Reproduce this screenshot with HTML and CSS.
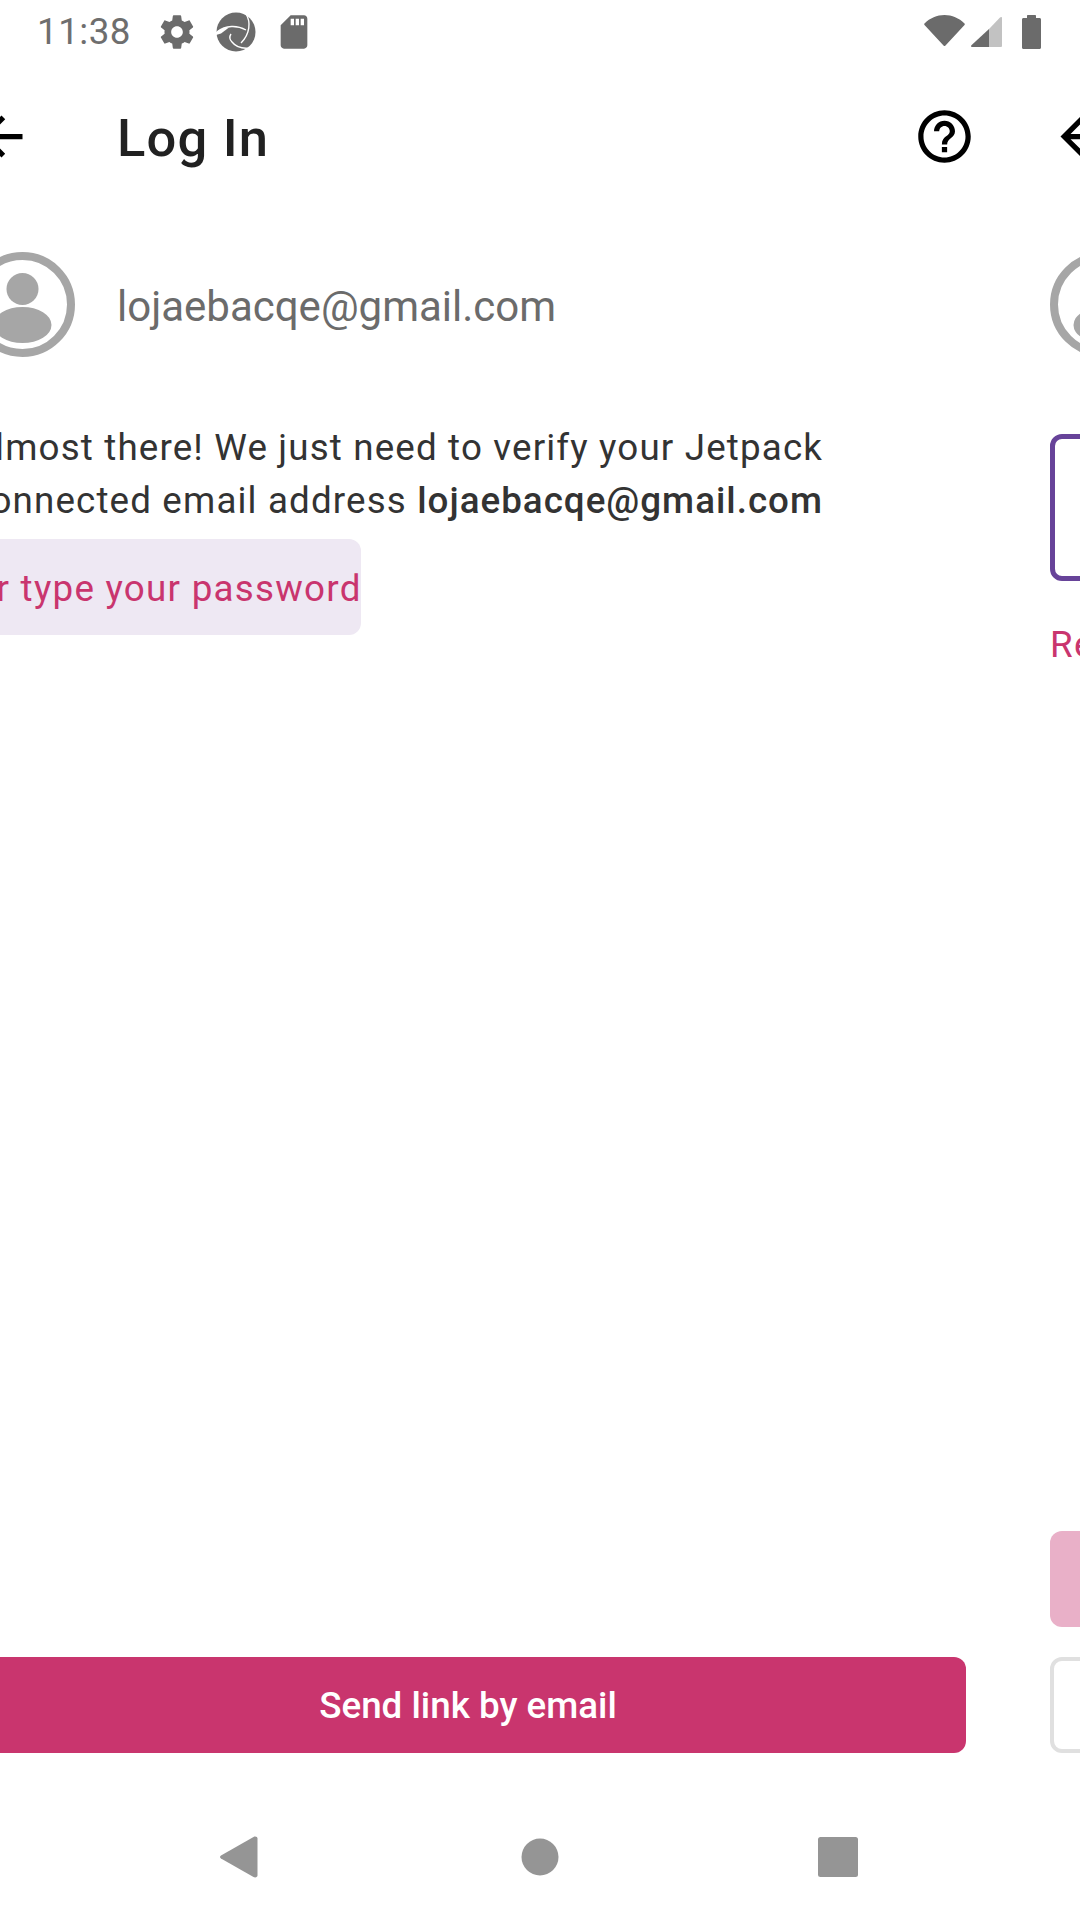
FILE: index.html
```html
<!DOCTYPE html>
<html lang="en-US">

<head>
    <meta charset="UTF-8">
    <title>Log In</title>
    <link rel="stylesheet" href="styles.css">
</head>

<body>
    <div class="screen">
        <div class="statusBar">
            <span class="clock">11:38</span>
            <svg class="gear" viewBox="0 0 24 24"><path d="M19.43 12.98c.04-.32.07-.64.07-.98s-.03-.66-.07-.98l2.11-1.65c.19-.15.24-.42.12-.64l-2-3.46c-.12-.22-.39-.3-.61-.22l-2.49 1c-.52-.4-1.08-.73-1.69-.98l-.38-2.65C14.46 2.18 14.25 2 14 2h-4c-.25 0-.46.18-.49.42l-.38 2.65c-.61.25-1.17.59-1.69.98l-2.49-1c-.23-.09-.49 0-.61.22l-2 3.46c-.13.22-.07.49.12.64l2.11 1.65c-.04.32-.07.65-.07.98s.03.66.07.98l-2.11 1.65c-.19.15-.24.42-.12.64l2 3.46c.12.22.39.3.61.22l2.49-1c.52.4 1.08.73 1.69.98l.38 2.65c.03.24.24.42.49.42h4c.25 0 .46-.18.49-.42l.38-2.65c.61-.25 1.17-.59 1.69-.98l2.49 1c.23.09.49 0 .61-.22l2-3.46c.12-.22.07-.49-.12-.64l-2.11-1.65zM12 15.5c-1.93 0-3.5-1.57-3.5-3.5s1.57-3.5 3.5-3.5 3.5 1.57 3.5 3.5-1.57 3.5-3.5 3.5z"/></svg>
            <svg class="aperture" viewBox="0 0 40 40">
                <circle cx="20" cy="20" r="19.5"/>
                <path class="wedge" d="M0 20C4 17 8 15.5 13 15.5L5 21.5 0 23z"/>
                <path class="cut" d="M1 20C10 13 21 13 30 18M30 2C35 10 34 22 25 31M15 22C13 25 14 28 16 30C20 35 26 37 34 36"/>
            </svg>
            <svg class="sdCard" viewBox="0 0 24 24"><path d="M18 2h-8L4 8v12c0 1.1.9 2 2 2h12c1.1 0 2-.9 2-2V4c0-1.1-.9-2-2-2zm-6 6h-2V4h2v4zm3 0h-2V4h2v4zm3 0h-2V4h2v4z"/></svg>
            <div class="statusRight">
                <svg class="wifi" viewBox="0 0 41 31"><path d="M0.5 8.5C6 3 13 0 20.5 0S35 3 40.5 8.5a1 1 0 0 1 0 1.4L21.5 30.5a1.3 1.3 0 0 1-2 0L0.5 9.9a1 1 0 0 1 0-1.4z"/></svg>
                <svg class="signal" viewBox="0 0 31 31">
                    <path class="dim" d="M18 13L29 1.5C30 .5 31 1 31 2V29.5C31 30.5 30.5 31 29.5 31H18z"/>
                    <path d="M18 13V31H1C0 31-.3 30 .4 29.3z"/>
                </svg>
                <svg class="battery" viewBox="0 0 19 34"><path d="M5 3V1C5 .4 5.4 0 6 0H13C13.6 0 14 .4 14 1V3H17.5C18.4 3 19 3.6 19 4.5V32.5C19 33.4 18.4 34 17.5 34H1.5C.6 34 0 33.4 0 32.5V4.5C0 3.6 .6 3 1.5 3z"/></svg>
            </div>
        </div>

        <!-- two pages, caught mid swipe -->
        <div class="track">
            <div class="page">
                <div class="toolbar">
                    <svg class="toolIcon" viewBox="0 0 24 24"><path d="M20 11H7.83l5.59-5.59L12 4l-8 8 8 8 1.41-1.41L7.83 13H20v-2z"/></svg>
                    <h1 class="title">Log In</h1>
                    <svg class="toolIcon help" viewBox="0 0 24 24"><path d="M11 18h2v-2h-2v2zm1-16C6.48 2 2 6.48 2 12s4.48 10 10 10 10-4.48 10-10S17.52 2 12 2zm0 18c-4.41 0-8-3.59-8-8s3.59-8 8-8 8 3.59 8 8-3.59 8-8 8zm0-14c-2.21 0-4 1.79-4 4h2c0-1.1.9-2 2-2s2 .9 2 2c0 2-3 1.75-3 5h2c0-2.25 3-2.5 3-5 0-2.21-1.79-4-4-4z"/></svg>
                </div>
                <div class="account">
                    <svg class="avatar" viewBox="0 0 105 105">
                        <circle class="ring" cx="52.5" cy="52.5" r="48.5"/>
                        <circle cx="52.5" cy="37" r="16"/>
                        <ellipse cx="52.5" cy="73" rx="29" ry="18"/>
                    </svg>
                    <span class="email">lojaebacqe@gmail.com</span>
                </div>
                <p class="message">Almost there! We just need to verify your Jetpack<br>connected email address <b>lojaebacqe@gmail.com</b></p>
                <div class="chipRow">
                    <button class="textButton chip">Or type your password</button>
                </div>
                <div class="actions">
                    <button class="primary">Send link by email</button>
                </div>
            </div>

            <div class="page">
                <div class="toolbar">
                    <svg class="toolIcon" viewBox="0 0 24 24"><path d="M20 11H7.83l5.59-5.59L12 4l-8 8 8 8 1.41-1.41L7.83 13H20v-2z"/></svg>
                </div>
                <div class="account">
                    <svg class="avatar" viewBox="0 0 105 105">
                        <circle class="ring" cx="52.5" cy="52.5" r="48.5"/>
                        <circle cx="52.5" cy="37" r="16"/>
                        <ellipse cx="52.5" cy="73" rx="29" ry="18"/>
                    </svg>
                </div>
                <div class="passwordBox"></div>
                <button class="textButton reset">Reset your password</button>
                <div class="actions">
                    <button class="primary disabled"></button>
                    <button class="outline"></button>
                </div>
            </div>
        </div>

        <div class="navBar">
            <svg viewBox="0 0 38 42"><path d="M0 19.5L32.5 1C34.5 0 36.5 1 36.5 2.5V39.5C36.5 41 34.5 42 32.5 41L0 22.5C-1.3 21.7-1.3 20.3 0 19.5z"/></svg>
            <svg viewBox="0 0 38 42"><circle cx="19" cy="21" r="18.5"/></svg>
            <svg viewBox="0 0 38 42"><rect x="-3" y="1" width="40" height="40" rx="2.5"/></svg>
        </div>
    </div>
</body>

</html>
```

FILE: styles.css
```css
body {
    font-family: 'Roboto', sans-serif;
    background-color: #fff;
    margin: 0;
    padding: 0;
}

.screen {
    width: 1080px;
    height: 1920px;
    display: flex;
    flex-direction: column;
    overflow: hidden;
}

.statusBar {
    height: 63px;
    flex: none;
    display: flex;
    align-items: center;
    padding: 0 39px 0 37px;
    color: #6e6e6e;
    fill: #6b6b6b;
}

.clock {
    font-size: 36.75px;
    letter-spacing: 0.5px;
    margin-right: 26px;
}

.gear {
    width: 40px;
    height: 40px;
}

.aperture {
    width: 40px;
    height: 40px;
    margin-left: 19px;
}

.wedge {
    fill: #fff;
}

.cut {
    fill: none;
    stroke: #fff;
    stroke-width: 1.4;
}

.sdCard {
    width: 40px;
    height: 40px;
    margin-left: 18px;
}

.statusRight {
    margin-left: auto;
    display: flex;
    align-items: center;
}

.wifi {
    width: 41px;
    height: 31px;
    margin-bottom: 3px;
}

.signal {
    width: 31px;
    height: 31px;
    margin-left: 6px;
}

.dim {
    fill: #c2c2c2;
}

.battery {
    width: 19px;
    height: 34px;
    margin-left: 20px;
}

.track {
    flex: 1;
    min-height: 0;
    display: flex;
    margin-left: -72px;
}

.page {
    width: 1080px;
    flex: none;
    display: flex;
    flex-direction: column;
}

.toolbar {
    height: 147px;
    flex: none;
    display: flex;
    align-items: center;
    padding: 0 32px 0 42px;
}

.toolIcon {
    width: 63px;
    height: 63px;
    fill: #000;
}

.help {
    margin-left: auto;
}

.title {
    margin: 2px 0 0 84px;
    font-size: 52.5px;
    font-weight: 500;
    letter-spacing: 1.2px;
    color: #212121;
}

.account {
    height: 105px;
    flex: none;
    margin-top: 42px;
    padding: 0 42px;
    display: flex;
    align-items: center;
    gap: 42px;
}

.avatar {
    width: 105px;
    height: 105px;
    fill: #a6a6a6;
}

.ring {
    fill: none;
    stroke: #a6a6a6;
    stroke-width: 8;
}

.email {
    padding-top: 3px;
    font-size: 42px;
    color: #6b6b6b;
}

.message {
    margin: 65px 0 0;
    padding: 0 42px;
    font-size: 36.75px;
    line-height: 52.5px;
    letter-spacing: 1.15px;
    color: #333;
}

.message b {
    font-weight: 500;
    letter-spacing: 1px;
}

button {
    font-family: inherit;
    border: none;
    padding: 0;
}

.chipRow {
    padding: 12px 0 0 42px;
}

.textButton {
    height: 96px;
    padding-top: 2px;
    font-size: 36.75px;
    letter-spacing: 1.25px;
    color: #c9356e;
    background: none;
    border-radius: 12px;
}

.chip {
    width: 391px;
    white-space: nowrap;
    background-color: #eee8f3;
}

.passwordBox {
    height: 147px;
    flex: none;
    margin: 77px 42px 0;
    border: 5px solid #674399;
    border-radius: 12px;
    box-sizing: border-box;
}

.reset {
    align-self: flex-start;
    margin: 14px 0 0 42px;
}

.actions {
    margin-top: auto;
    padding: 0 42px 41px;
    display: flex;
    flex-direction: column;
    gap: 30px;
}

.primary {
    height: 96px;
    flex: none;
    font-size: 36.75px;
    font-weight: 500;
    color: #fff;
    background-color: #c9356e;
    border-radius: 12px;
}

.disabled {
    background-color: #e9b0c8;
}

.outline {
    height: 96px;
    flex: none;
    background: #fff;
    border: 4px solid #e0e0e0;
    border-radius: 12px;
}

.navBar {
    height: 126px;
    flex: none;
    display: flex;
    justify-content: center;
    align-items: center;
    gap: 262px;
    fill: #959595;
}

.navBar svg {
    width: 38px;
    height: 42px;
    overflow: visible;
}
```
